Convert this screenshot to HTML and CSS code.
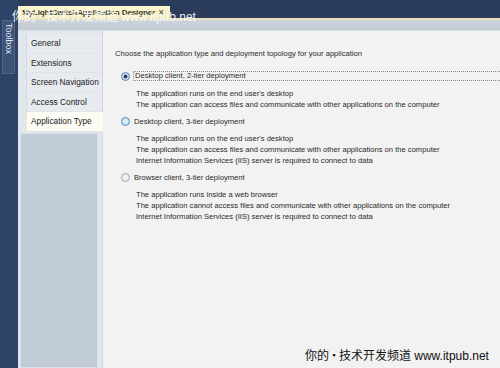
FILE: index.html
```html
<!DOCTYPE html>
<html lang="en">
<head>
  <meta charset="UTF-8">
  <title>MyLightSwitchApplication Designer</title>
  <link rel="stylesheet" href="styles.css">
</head>
<body>
  <div class="window">
    <aside class="toolbox-strip">
      <div class="toolbox-label">Toolbox</div>
    </aside>

    <div class="workspace">
      <div class="tabbar">
        <div class="doc-tab">
          <span>MyLightSwitchApplication Designer</span>
          <span class="close">×</span>
        </div>
      </div>
      <div class="tab-rule"></div>
      <div class="subbar"></div>

      <div class="designer">
        <nav class="side">
          <ul class="side-nav">
            <li>General</li>
            <li>Extensions</li>
            <li>Screen Navigation</li>
            <li>Access Control</li>
            <li class="active">Application Type</li>
          </ul>
          <div class="side-panel"></div>
        </nav>

        <section class="content">
          <p class="intro">Choose the application type and deployment topology for your application</p>

          <div class="option">
            <div class="option-head focused">
              <span class="radio checked"></span>
              <span>Desktop client, 2-tier deployment</span>
            </div>
            <div class="option-desc">
              <div>The application runs on the end user's desktop</div>
              <div>The application can access files and communicate with other applications on the computer</div>
            </div>
          </div>

          <div class="option">
            <div class="option-head">
              <span class="radio hover"></span>
              <span>Desktop client, 3-tier deployment</span>
            </div>
            <div class="option-desc">
              <div>The application runs on the end user's desktop</div>
              <div>The application can access files and communicate with other applications on the computer</div>
              <div>Internet Information Services (IIS) server is required to connect to data</div>
            </div>
          </div>

          <div class="option">
            <div class="option-head">
              <span class="radio"></span>
              <span>Browser client, 3-tier deployment</span>
            </div>
            <div class="option-desc">
              <div>The application runs inside a web browser</div>
              <div>The application cannot access files and communicate with other applications on the computer</div>
              <div>Internet Information Services (IIS) server is required to connect to data</div>
            </div>
          </div>
        </section>
      </div>
    </div>
  </div>

  <!-- site watermark, stamped twice on the capture -->
  <div class="mark mark-top">你的 <span class="dot">▪</span> 技术开发频道 www.itpub.net</div>
  <div class="mark mark-bottom">你的 <span class="dot">▪</span> 技术开发频道 www.itpub.net</div>
</body>
</html>
```

FILE: styles.css
```css
body {
  margin: 0;
  width: 500px;
  height: 368px;
  overflow: hidden;
  background-color: #f1f1f1;
  font-family: "Liberation Sans", Arial, sans-serif;
  font-size: 7.6px;
  color: #2a2a2a;
  position: relative;
}

.window {
  display: flex;
  height: 368px;
}

/* left toolbox strip */
.toolbox-strip {
  width: 18px;
  background-color: #2e4368;
  padding-top: 20px;
  box-sizing: border-box;
}

.toolbox-label {
  writing-mode: vertical-rl;
  font-family: "Liberation Sans", Arial, sans-serif;
  color: #dfe6f0;
  font-size: 9px;
  height: 54px;
  width: 13px;
  margin-left: 2px;
  padding-top: 2px;
  box-sizing: border-box;
  background-color: #3d5378;
  border: 1px solid #4e6488;
  line-height: 11px;
}

.workspace {
  flex: 1;
  display: flex;
  flex-direction: column;
}

/* document tab row */
.tabbar {
  height: 18px;
  background-color: #2b3c5b;
  display: flex;
  align-items: flex-end;
}

.doc-tab {
  width: 152px;
  height: 12px;
  background: linear-gradient(#fdf7d6, #f4eab9);
  display: flex;
  align-items: center;
  justify-content: space-between;
  padding: 0 4px;
  box-sizing: border-box;
  font-size: 8px;
  font-weight: bold;
  letter-spacing: -0.1px;
  white-space: nowrap;
  color: #3a3a30;
}

.doc-tab .close {
  font-weight: normal;
  font-size: 10px;
  margin-right: 2px;
}

.tab-rule {
  height: 2px;
  background-color: #e9e3bd;
}

.subbar {
  height: 10px;
  background: linear-gradient(#cdd4dc, #c2cad4);
  border-bottom: 1px solid #dde2e8;
}

.designer {
  flex: 1;
  display: flex;
  min-height: 0;
}

/* settings navigation */
.side {
  width: 85px;
  display: flex;
  flex-direction: column;
  background-color: #e2e7ed;
  border-right: 1px solid #d0d6de;
  padding-top: 3px;
  box-sizing: border-box;
}

.side-nav {
  list-style: none;
  margin: 0 0 0 8px;
  padding: 0;
  background-color: #e7ebf0;
  border-left: 1px solid #d2d9e1;
}

.side-nav li {
  height: 19.5px;
  line-height: 19.5px;
  padding-left: 4px;
  font-size: 8.3px;
  color: #222;
  border-bottom: 1px solid #dfe4ea;
  box-sizing: border-box;
}

.side-nav li.active {
  background-color: #fcfcf4;
  margin-right: -4px;
  margin-left: -1px;
  border-left: 1px solid #efe8c4;
  padding-left: 4px;
}

.side-panel {
  flex: 1;
  margin: 1px 4px 0 2px;
  background-color: #c1ccd8;
  border: 1px solid #d9e0e8;
}

/* page content */
.content {
  flex: 1;
  padding: 18px 0 0 12px;
  background-color: #f2f2f2;
}

.intro {
  margin: 0 0 12px 0;
  line-height: 10px;
}

.option {
  margin-bottom: 6px;
}

.option-head {
  display: flex;
  align-items: center;
  gap: 4px;
  height: 10px;
  margin-left: 6px;
}

.option-head.focused span:last-child {
  flex: 1;
  border: 1px dotted #8a8a8a;
  border-right: none;
  margin-left: -1px;
  padding-left: 1px;
  line-height: 8px;
}

.radio {
  width: 7px;
  height: 7px;
  border-radius: 50%;
  border: 1px solid #a9a9a9;
  background: radial-gradient(#f6f6f6, #e0e0e0);
  flex-shrink: 0;
}

.radio.checked {
  border-color: #5d7fa6;
  background: radial-gradient(circle, #2a3f5c 0 1.6px, #b9d0e8 2.2px, #e5eef7 4px);
}

.radio.hover {
  border-color: #4f8ec2;
  background: radial-gradient(#e4f3fd, #b4d9f2);
}

.option-desc {
  margin: 7px 0 0 21px;
  line-height: 11px;
}

/* watermark */
.mark {
  position: absolute;
  font-family: "Liberation Sans", "Noto Sans CJK SC", sans-serif;
  font-size: 12px;
  white-space: nowrap;
}

.mark .dot {
  font-size: 9px;
  vertical-align: 2px;
}

.mark-top {
  left: 12px;
  top: 7px;
  color: rgba(255, 255, 255, 0.92);
}

.mark-bottom {
  left: 305px;
  top: 346px;
  color: #111;
}
```
